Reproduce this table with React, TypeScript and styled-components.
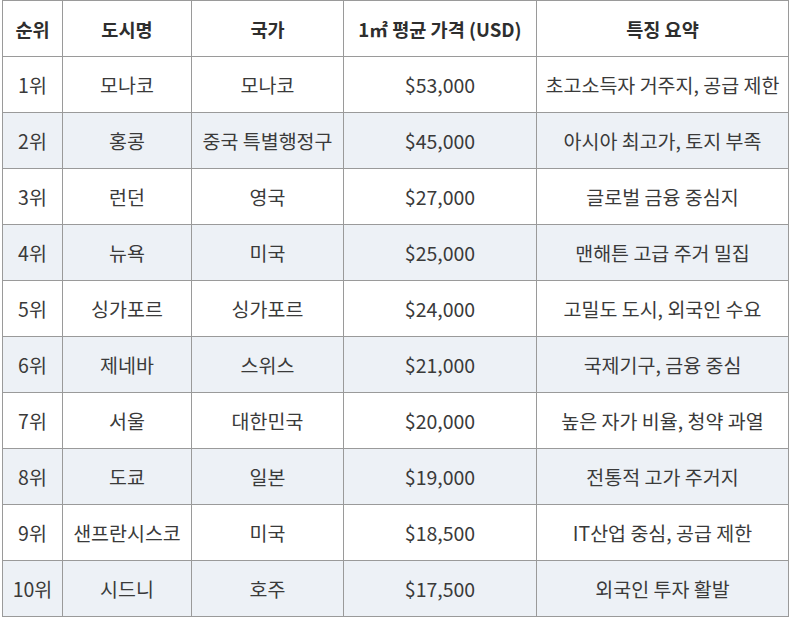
import styled, { createGlobalStyle } from "styled-components";

const GlobalStyle = createGlobalStyle`
  html, body {
    margin: 0;
    padding: 0;
    background: #ffffff;
  }
  body {
    font-family: "Noto Sans CJK KR", "Noto Sans", sans-serif;
    color: #333333;
  }
`;

interface CityRow {
  rank: string;
  city: string;
  country: string;
  price: string;
  note: string;
}

const rows: CityRow[] = [
  { rank: "1위", city: "모나코", country: "모나코", price: "$53,000", note: "초고소득자 거주지, 공급 제한" },
  { rank: "2위", city: "홍콩", country: "중국 특별행정구", price: "$45,000", note: "아시아 최고가, 토지 부족" },
  { rank: "3위", city: "런던", country: "영국", price: "$27,000", note: "글로벌 금융 중심지" },
  { rank: "4위", city: "뉴욕", country: "미국", price: "$25,000", note: "맨해튼 고급 주거 밀집" },
  { rank: "5위", city: "싱가포르", country: "싱가포르", price: "$24,000", note: "고밀도 도시, 외국인 수요" },
  { rank: "6위", city: "제네바", country: "스위스", price: "$21,000", note: "국제기구, 금융 중심" },
  { rank: "7위", city: "서울", country: "대한민국", price: "$20,000", note: "높은 자가 비율, 청약 과열" },
  { rank: "8위", city: "도쿄", country: "일본", price: "$19,000", note: "전통적 고가 주거지" },
  { rank: "9위", city: "샌프란시스코", country: "미국", price: "$18,500", note: "IT산업 중심, 공급 제한" },
  { rank: "10위", city: "시드니", country: "호주", price: "$17,500", note: "외국인 투자 활발" },
];

const Table = styled.table`
  border-collapse: collapse;
  table-layout: fixed;
  width: 786px;
  margin-left: 2px;
  font-size: 19.5px;
`;

const HeadRow = styled.tr`
  height: 56px;
  background: #ffffff;
`;

const BodyRow = styled.tr<{ $striped: boolean }>`
  height: 56px;
  background: ${({ $striped }) => ($striped ? "#edf1f6" : "#ffffff")};
`;

const HeadCell = styled.th`
  border: 1px solid #9a9a9a;
  font-size: 18.6px;
  font-weight: 700;
  text-align: center;
  vertical-align: middle;
  padding: 0 2px;
  color: #2e2e2e;
  white-space: nowrap;
`;

const Cell = styled.td`
  border: 1px solid #9a9a9a;
  text-align: center;
  vertical-align: middle;
  padding: 0 2px;
  color: #3a3a3a;
  white-space: nowrap;
`;

const colWidths = [60, 129, 152, 193, 252];

export default function App() {
  return (
    <>
      <GlobalStyle />
      <Table>
        <colgroup>
          {colWidths.map((w, i) => (
            <col key={i} style={{ width: w }} />
          ))}
        </colgroup>
        <thead>
          <HeadRow>
            <HeadCell>순위</HeadCell>
            <HeadCell>도시명</HeadCell>
            <HeadCell>국가</HeadCell>
            <HeadCell>1㎡ 평균 가격 (USD)</HeadCell>
            <HeadCell>특징 요약</HeadCell>
          </HeadRow>
        </thead>
        <tbody>
          {rows.map((r, i) => (
            <BodyRow key={r.rank} $striped={i % 2 === 1}>
              <Cell>{r.rank}</Cell>
              <Cell>{r.city}</Cell>
              <Cell>{r.country}</Cell>
              <Cell>{r.price}</Cell>
              <Cell>{r.note}</Cell>
            </BodyRow>
          ))}
        </tbody>
      </Table>
    </>
  );
}
